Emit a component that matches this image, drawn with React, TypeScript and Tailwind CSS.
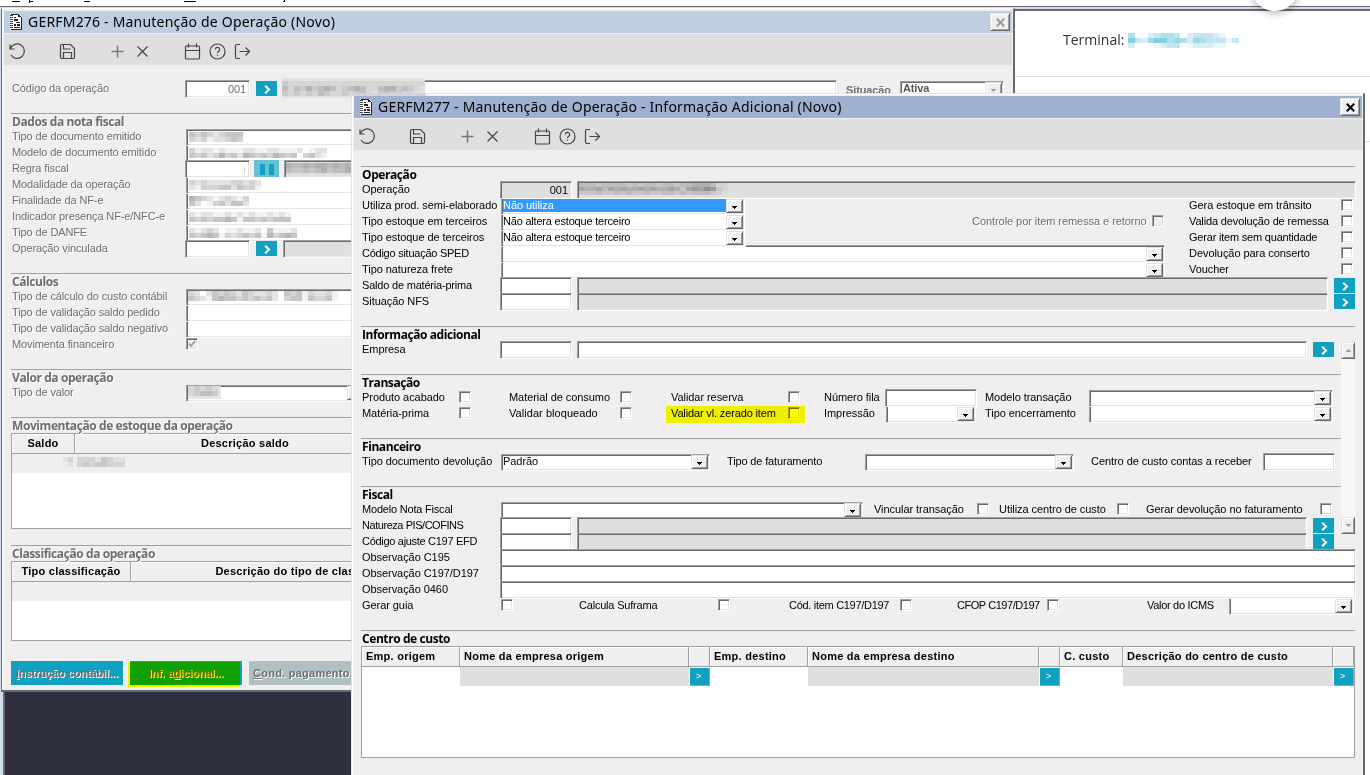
import React from "react";
import clsx from "clsx";

const SUNKEN =
  "shrink-0 border border-t-[#a0a0a0] border-l-[#a0a0a0] border-b-white border-r-white shadow-[inset_1px_1px_0_#696969,inset_-1px_-1px_0_#e3e3e3]";
const RAISED =
  "border border-t-[#e3e3e3] border-l-[#e3e3e3] border-b-[#696969] border-r-[#696969] bg-[#efefef] shadow-[inset_1px_1px_0_#fff,inset_-1px_-1px_0_#a0a0a0]";
const DISABLED_TEXT = "text-[#6d6d6d] [text-shadow:1px_1px_0_#fff]";

function Row({ children, className }: { children: React.ReactNode; className?: string }) {
  return <div className={clsx("flex h-4 items-start", className)}>{children}</div>;
}

function Label({ children, className, disabled }: { children: React.ReactNode; className?: string; disabled?: boolean }) {
  return (
    <span className={clsx("block h-4 shrink-0 whitespace-nowrap pl-px leading-4", disabled && DISABLED_TEXT, className)}>
      {children}
    </span>
  );
}

function Field({ value, className, readOnly }: { value?: React.ReactNode; className?: string; readOnly?: boolean }) {
  return (
    <div className={clsx("h-[18px] pr-[3px] text-right leading-[17px]", SUNKEN, readOnly ? "bg-[#dfdfdf]" : "bg-white", className)}>
      {value}
    </div>
  );
}

function Arrow({ up, color = "#000" }: { up?: boolean; color?: string }) {
  return (
    <svg width="5" height="3" viewBox="0 0 5 3" shapeRendering="crispEdges" fill={color}>
      <path d={up ? "M2 0h1v1h1v1h1v1H0V2h1V1h1z" : "M0 0h5v1H4v1H3v1H2V2H1V1H0z"} />
    </svg>
  );
}

// stacked selects share the bottom edge of the one above
function Select({
  value,
  className,
  stacked,
  selected,
  disabled
}: {
  value?: React.ReactNode;
  className?: string;
  stacked?: boolean;
  selected?: boolean;
  disabled?: boolean;
}) {
  return (
    <div
      className={clsx(
        "mt-px flex h-[17px] shrink-0 border border-l-[#a0a0a0] border-b-white border-r-white bg-white",
        stacked
          ? "border-t-white shadow-[inset_1px_0_0_#696969,inset_-1px_-1px_0_#e3e3e3]"
          : "border-t-[#a0a0a0] shadow-[inset_1px_1px_0_#696969,inset_-1px_-1px_0_#e3e3e3]",
        className
      )}
    >
      <div className={clsx("ml-px h-[13px] flex-1 whitespace-nowrap leading-[13px]", selected && "bg-[#3399ff] text-white")}>
        {value}
      </div>
      <div className={clsx("mr-px flex h-[14px] w-[17px] items-center justify-center pt-[2px]", RAISED)}>
        <Arrow color={disabled ? "#a0a0a0" : "#000"} />
      </div>
    </div>
  );
}

function Check({ className, disabled, checked }: { className?: string; disabled?: boolean; checked?: boolean }) {
  return (
    <span className={clsx("mt-[2px] block h-[12px] w-[12px]", SUNKEN, disabled ? "bg-[#efefef]" : "bg-white", className)}>
      {checked && (
        <svg width="10" height="10" viewBox="0 0 10 10" fill="none" stroke="#a0a0a0" strokeWidth="2">
          <path d="M2 4.5l2 2.5 4-5" />
        </svg>
      )}
    </span>
  );
}

function Lookup({ className }: { className?: string }) {
  return (
    <button className={clsx("mt-px flex h-[15px] w-[21px] shrink-0 items-center justify-center bg-[#10a0c0] pl-px pt-px", className)}>
      <svg width="7" height="9" viewBox="0 0 7 9" fill="none" stroke="#fff" strokeWidth="2">
        <path d="M1.2 .8L5 4.5 1.2 8.2" />
      </svg>
    </button>
  );
}

function Highlight({ className }: { className: string }) {
  return <div className={clsx("pointer-events-none absolute bg-[#ff0] mix-blend-multiply", className)} />;
}

// masked value: every digit is the darkness of one cell
function Mosaic({ rows, cell = 6, line = 5, color = "#555", className }: { rows: string[]; cell?: number; line?: number; color?: string; className?: string }) {
  const width = rows[0].length * cell;
  return (
    <svg className={clsx("block shrink-0", className)} width={width} height={rows.length * line} shapeRendering="crispEdges" fill={color}>
      {rows.map((row, y) =>
        row.split("").map((level, x) => (
          <rect key={`${y}-${x}`} x={x * cell} y={y * line} width={cell} height={line} opacity={Number(level) / 12} />
        ))
      )}
    </svg>
  );
}

function Section({ title, disabled, children, className }: { title: string; disabled?: boolean; children?: React.ReactNode; className?: string }) {
  return (
    <section className={className}>
      <div className="h-px bg-[#a0a0a0]" />
      <h2
        className={clsx(
          "h-[14px] whitespace-nowrap pl-px font-['Open_Sans',sans-serif] text-[12px] font-bold leading-4 tracking-[-0.42px]",
          disabled && DISABLED_TEXT
        )}
      >
        {title}
      </h2>
      {children}
    </section>
  );
}

function TitleBar({ title, active }: { title: string; active?: boolean }) {
  return (
    <header className={clsx("flex h-[22px] items-center pl-[6px] pr-[2px]", active ? "bg-[#a0b0d0]" : "bg-[#c0cfe0]")}>
      <svg width="12" height="16" viewBox="0 0 12 16" shapeRendering="crispEdges">
        <path d="M0 0h9l3 3v13H0z" fill="#fff" />
        <path d="M1 0h8v1H1zM1 15h11v1H1zM11 3h1v12h-1zM9 1h1v1h1v1H8V1zM4 3h2v1H4zM4 5h4v2H4zM6 8h4v1H6zM4 10h2v2H4zM7 10h3v2H7zM4 13h6v1H4z" fill="#222" />
        <path d="M0 1h3v1H0zM0 3h3v1H0zM0 5h3v1H0zM0 7h3v1H0zM0 9h3v1H0zM0 11h3v1H0zM0 13h3v1H0z" fill="#444" />
      </svg>
      <h1 className="ml-[6px] flex-1 whitespace-nowrap font-['Noto_Sans',sans-serif] text-[14px] leading-[22px] tracking-[0.2px]">{title}</h1>
      <button className={clsx("flex h-[18px] w-5 items-center justify-center", RAISED)}>
        <svg width="9" height="9" viewBox="0 0 9 9" stroke={active ? "#000" : "#999"} strokeWidth="2">
          <path d="M.8 .7l7.4 7.6M8.2 .7L.8 8.3" />
        </svg>
      </button>
    </header>
  );
}

const TOOL_ICONS: (string | null)[] = [
  "M1 1.5v4.500h4.500M1.300 5.700A7.200 7.200 0 1 1 2 12",
  null,
  "M1.500 3a1.500 1.500 0 0 1 1.500-1.500h8.500l4 4V14a1.500 1.500 0 0 1-1.500 1.500H3A1.500 1.500 0 0 1 1.500 14zM4.500 15.500V9.500h8v6M4.500 1.500v4.500h7",
  null,
  "M8.500 2.500v12M2.500 8.500h12",
  "M3.500 3.500l10 10M13.500 3.500l-10 10",
  null,
  "M1.500 4a1 1 0 0 1 1-1h12a1 1 0 0 1 1 1v11a1 1 0 0 1-1 1h-12a1 1 0 0 1-1-1zM1.500 7.500h14M4.500 .5v4M12.500 .5v4",
  "M8.500 1a7.500 7.500 0 1 0 0 15a7.500 7.500 0 1 0 0-15M6.300 6.500a2.200 2.200 0 1 1 3.200 2c-.8.4-1 .8-1 1.500M8.500 11.500v1.200",
  "M6 1.500H3A1.500 1.500 0 0 0 1.500 3v11A1.500 1.500 0 0 0 3 15.500h3M5.500 8.500h10M11.500 4.500l4 4-4 4"
];

function Toolbar() {
  return (
    <nav className="mt-px flex h-[31px] items-center bg-[#dfdfdf] pl-px pt-[3px]">
      {TOOL_ICONS.map((d, index) => (
        <span key={index} className="flex w-[25px] justify-center">
          {d && (
            <svg width="17" height="17" viewBox="0 0 17 17" fill="none" stroke={index === 4 ? "#777" : "#444"} strokeWidth={index === 4 ? 1.5 : 1.2}>
              <path d={d} />
            </svg>
          )}
        </span>
      ))}
    </nav>
  );
}

function HeadCell({ children, className }: { children?: React.ReactNode; className?: string }) {
  return (
    <div
      className={clsx(
        "h-5 shrink-0 overflow-hidden whitespace-nowrap border-b border-r border-[#a0a0a0] bg-[#efefef] text-[11px] font-bold leading-[19px] tracking-[0.25px] shadow-[inset_1px_1px_0_#fff]",
        className
      )}
    >
      {children}
    </div>
  );
}

function GridLookup({ className }: { className?: string }) {
  return (
    <div className={clsx("mt-px flex h-[18px] items-center justify-center border-b border-r border-[#a0a0a0] bg-[#10a0c0] pr-[2px] pt-px text-[9px] text-white", className)}>
      &gt;
    </div>
  );
}

function OperationWindow() {
  return (
    <div className="absolute left-[1px] top-[8px] h-[684px] w-[1014px] overflow-hidden border-b-2 border-l border-r-2 border-t border-b-[#696969] border-l-[#696969] border-r-[#696969] border-t-white bg-[#efefef] pl-[2px] pr-px pt-[2px] shadow-[inset_1px_0_0_#fff]">
      <TitleBar title="GERFM276 - Manutenção de Operação (Novo)" />
      <Toolbar />
      <div className="pl-[7px] pt-[15px] text-[11px] tracking-[-0.12px]">
        <Row className="mb-[17px]">
          <Label disabled className="w-[174px]">Código da operação</Label>
          <Field value={<span className="text-[#6d6d6d]">001</span>} className="w-[65px]" />
          <Lookup className="ml-[6px]" />
          <div className="relative ml-[6px]">
            <div className={clsx("h-[18px] w-[554px] bg-white", SUNKEN)} />
            <div className="absolute -left-px -top-[2px] h-[20px] w-[143px] bg-[#e2e2e2]">
              <Mosaic rows={["211111111111111111111111", "313242343123431134423210", "212121321121231023221100"]} className="mt-[3px]" />
            </div>
          </div>
          <Label disabled className="ml-[8px] w-[55px] pt-[2px] font-bold">Situação</Label>
          <Select disabled value={<b className="pl-px text-[#555]">Ativa</b>} className="w-[104px]" />
        </Row>

        <Section title="Dados da nota fiscal" disabled className="mb-[17px]">
          <Row>
            <Label disabled className="w-[175px]">Tipo de documento emitido</Label>
            <Select className="w-[600px]" value={<Mosaic rows={["434323444", "323122343"]} className="ml-px mt-[2px]" />} />
          </Row>
          <Row>
            <Label disabled className="w-[175px]">Modelo de documento emitido</Label>
            <Select stacked className="w-[600px]" value={<Mosaic rows={["31221211122112211120122", "43423534254343543403421"]} className="ml-px mt-[2px]" />} />
          </Row>
          <Row>
            <Label disabled className="w-[174px]">Regra fiscal</Label>
            <Field className="w-[65px]" value={<span className="text-[#ccc]">ı</span>} />
            <div className="ml-1 flex h-[18px] w-[25px] items-center justify-center gap-[4px] bg-[#68c0d4]">
              <i className="h-[11px] w-[5px] bg-[#10a0c0]" />
              <i className="h-[11px] w-[5px] bg-[#10a0c0]" />
            </div>
            <Field readOnly className="ml-[5px] w-[500px]" value={<Mosaic rows={["433434434345", "322323423344"]} className="mt-[2px]" />} />
          </Row>
          <Row>
            <Label disabled className="w-[175px]">Modalidade da operação</Label>
            <Select stacked className="w-[600px]" value={<Mosaic rows={["323222233232", "213334424331"]} className="ml-px mt-[2px]" />} />
          </Row>
          <Row>
            <Label disabled className="w-[175px]">Finalidade da NF-e</Label>
            <Select stacked className="w-[600px]" value={<Mosaic rows={["5432123213", "4201342442"]} className="ml-px mt-[2px]" />} />
          </Row>
          <Row>
            <Label disabled className="w-[175px]">Indicador presença NF-e/NFC-e</Label>
            <Select stacked className="w-[600px]" value={<Mosaic rows={["21221121212112121", "43434454144343444"]} className="ml-px mt-[2px]" />} />
          </Row>
          <Row>
            <Label disabled className="w-[175px]">Tipo de DANFE</Label>
            <Select stacked className="w-[600px]" value={<Mosaic rows={["212320112112041112", "434541323434153454"]} className="ml-px mt-[2px]" />} />
          </Row>
          <Row>
            <Label disabled className="w-[174px]">Operação vinculada</Label>
            <Field className="w-[65px]" />
            <Lookup className="ml-[6px]" />
            <Field readOnly className="ml-[6px] w-[500px]" />
          </Row>
        </Section>

        <Section title="Cálculos" disabled className="mb-[17px]">
          <Row>
            <Label disabled className="w-[175px]">Tipo de cálculo do custo contábil</Label>
            <Select className="w-[600px]" value={<Mosaic rows={["3202434324322320434132231", "4321454434343420344143341"]} className="mt-[1px]" />} />
          </Row>
          <Row>
            <Label disabled className="w-[175px]">Tipo de validação saldo pedido</Label>
            <Select stacked className="w-[600px]" />
          </Row>
          <Row>
            <Label disabled className="w-[175px]">Tipo de validação saldo negativo</Label>
            <Select stacked className="w-[600px]" />
          </Row>
          <Row>
            <Label disabled className="w-[175px]">Movimenta financeiro</Label>
            <Check disabled checked />
          </Row>
        </Section>

        <Section title="Valor da operação" disabled className="mb-[17px]">
          <Row>
            <Label disabled className="w-[175px]">Tipo de valor</Label>
            <Select
              className="w-[180px]"
              value={
                <div className="h-[13px] w-[33px] bg-[#e4e4e4]">
                  <Mosaic rows={["12121", "12332"]} />
                </div>
              }
            />
          </Row>
        </Section>

        <Section title="Movimentação de estoque da operação" disabled className="mb-4">
          <div className="mt-px h-[96px] border border-[#a0a0a0] bg-white">
            <div className="flex">
              <HeadCell className="w-[63px] text-center">Saldo</HeadCell>
              <HeadCell className="w-[341px] text-center">Descrição saldo</HeadCell>
            </div>
            <div className="flex h-[19px] bg-[#efefef] pl-[51px] pt-[3px]">
              <Mosaic rows={["12", "01"]} cell={5} />
              <Mosaic rows={["22213211", "23233222"]} className="ml-1" />
            </div>
          </div>
        </Section>

        <Section title="Classificação da operação" disabled>
          <div className="mt-px h-[80px] border border-[#a0a0a0] bg-white">
            <div className="flex">
              <HeadCell className="w-[119px] text-center">Tipo classificação</HeadCell>
              <HeadCell className="w-[358px] text-center">Descrição do tipo de classificação</HeadCell>
            </div>
            <div className="h-[19px] bg-[#efefef]" />
          </div>
        </Section>

        <div className="relative mt-5 flex h-6 gap-[7px] text-[11px] font-bold leading-6 tracking-[-0.1px] text-[#6d6d6d]">
          <button className="w-[112px] whitespace-nowrap bg-[#10a0c0] text-center [text-shadow:1px_1px_0_#fff]"><u>I</u>nstrução contábil...</button>
          <button className="w-[112px] whitespace-nowrap bg-[#10a0c0] text-center [text-shadow:1px_1px_0_#fff]">Inf. a<u>d</u>icional...</button>
          <button className="w-[112px] whitespace-nowrap bg-[#b0c0c0] pl-1 text-left tracking-[0.25px] [text-shadow:1px_1px_0_#fff]"><u>C</u>ond. pagamento...</button>
          <Highlight className="left-[117px] top-px h-[25px] w-[112px]" />
        </div>
      </div>
    </div>
  );
}

function ScrollBar() {
  return (
    <div className="mt-px flex h-[192px] w-[14px] flex-col justify-between bg-[#f7f7f7]">
      <div className={clsx("flex h-[17px] items-center justify-center", RAISED)}>
        <Arrow up color="#a0a0a0" />
      </div>
      <div className={clsx("flex h-[17px] items-center justify-center", RAISED)}>
        <Arrow color="#a0a0a0" />
      </div>
    </div>
  );
}

function AdditionalInfoWindow() {
  return (
    <div className="absolute left-[351px] top-[93px] h-[690px] w-[1014px] border-l border-r-2 border-t border-l-[#e3e3e3] border-r-[#696969] border-t-[#e3e3e3] bg-[#efefef] pr-px shadow-[inset_1px_1px_0_#fff]">
      <div className="pl-[2px] pt-[2px]">
        <TitleBar active title="GERFM277 - Manutenção de Operação - Informação Adicional (Novo)" />
        <Toolbar />
      </div>
      <div className="w-[1003px] pl-[9px] pt-4 text-[11px] tracking-[-0.06px]">
        <Section title="Operação" className="mb-[17px]">
          <Row>
            <Label className="w-[139px]">Operação</Label>
            <Field readOnly value="001" className="w-[72px]" />
            <Field
              readOnly
              className="ml-[5px] w-[779px]"
              value={<Mosaic rows={["3332333323233233233444311", "5445354544545445425657621", "2223223232232233232333210"]} line={4} className="mt-[1px]" />}
            />
          </Row>
          <Row>
            <Label className="w-[139px]">Utiliza prod. semi-elaborado</Label>
            <Select selected value="Não utiliza" className="ml-px w-[244px]" stacked />
            <Label className="ml-[443px] w-[153px]">Gera estoque em trânsito</Label>
            <Check />
          </Row>
          <Row>
            <Label className="w-[139px]">Tipo estoque em terceiros</Label>
            <Select stacked value="Não altera estoque terceiro" className="ml-px w-[244px] tracking-[-0.2px]" />
            <Label disabled className="ml-[226px] w-[181px]">Controle por item remessa e retorno</Label>
            <Check disabled />
            <Label className="ml-[24px] w-[153px] tracking-[-0.14px]">Valida devolução de remessa</Label>
            <Check />
          </Row>
          <Row>
            <Label className="w-[139px]">Tipo estoque de terceiros</Label>
            <Select stacked value="Não altera estoque terceiro" className="ml-px w-[244px] tracking-[-0.2px]" />
            <Label className="ml-[443px] w-[153px] tracking-[-0.2px]">Gerar item sem quantidade</Label>
            <Check />
          </Row>
          <Row>
            <Label className="w-[139px] tracking-[-0.25px]">Código situação SPED</Label>
            <div className="relative ml-px">
              <Select stacked className="w-[664px]" />
              <div className="absolute left-[245px] right-px top-0 h-[2px] border-t border-[#a0a0a0] bg-[#696969]" />
            </div>
            <Label className="ml-[23px] w-[153px]">Devolução para conserto</Label>
            <Check />
          </Row>
          <Row>
            <Label className="w-[139px]">Tipo natureza frete</Label>
            <Select stacked className="ml-px w-[664px]" />
            <Label className="ml-[23px] w-[153px]">Voucher</Label>
            <Check />
          </Row>
          <Row>
            <Label className="w-[139px] tracking-[-0.2px]">Saldo de matéria-prima</Label>
            <Field className="w-[72px]" />
            <Field readOnly className="ml-[5px] w-[751px]" />
            <Lookup className="ml-[6px]" />
          </Row>
          <Row>
            <Label className="w-[139px]">Situação NFS</Label>
            <Field className="w-[72px]" />
            <Field readOnly className="ml-[5px] w-[751px]" />
            <Lookup className="ml-[6px]" />
          </Row>
        </Section>

        <Section title="Informação adicional">
          <div className="flex h-[208px]">
            <div className="w-[980px]">
              <Row className="mb-[17px]">
                <Label className="w-[139px]">Empresa</Label>
                <Field className="w-[72px]" />
                <Field className="ml-[5px] w-[730px]" />
                <Lookup className="ml-[6px]" />
              </Row>

              <Section title="Transação" className="mb-[17px]">
                <Row>
                  <Label className="w-[98px]">Produto acabado</Label>
                  <Check />
                  <Label className="ml-[37px] w-[112px]">Material de consumo</Label>
                  <Check />
                  <Label className="ml-[38px] w-[118px]">Validar reserva</Label>
                  <Check />
                  <Label className="ml-[23px] w-[62px]">Número fila</Label>
                  <Field className="w-[92px]" />
                  <Label className="ml-[7px] w-[105px]">Modelo transação</Label>
                  <Select className="w-[244px]" />
                </Row>
                <Row className="relative">
                  <Label className="w-[98px]">Matéria-prima</Label>
                  <Check />
                  <Label className="ml-[37px] w-[112px] tracking-[0.05px]">Validar bloqueado</Label>
                  <Check />
                  <Label className="ml-[38px] w-[118px] tracking-[-0.14px]">Validar vl. zerado item</Label>
                  <Check />
                  <Label className="ml-[23px] w-[63px]">Impressão</Label>
                  <Select stacked className="w-[90px]" />
                  <Label className="ml-[8px] w-[105px]">Tipo encerramento</Label>
                  <Select stacked className="w-[244px]" />
                  <Highlight className="left-[305px] top-px h-[17px] w-[139px]" />
                </Row>
              </Section>

              <Section title="Financeiro" className="mb-[17px]">
                <Row>
                  <Label className="w-[139px]">Tipo documento devolução</Label>
                  <Select value="Padrão" className="ml-px w-[209px]" />
                  <Label className="ml-[16px] w-[139px] tracking-[-0.15px]">Tipo de faturamento</Label>
                  <Select className="w-[209px]" />
                  <Label className="ml-[16px] w-[173px]">Centro de custo contas a receber</Label>
                  <Field className="w-[72px]" />
                </Row>
              </Section>

              <Section title="Fiscal">
                <Row>
                  <Label className="w-[139px] tracking-[-0.2px]">Modelo Nota Fiscal</Label>
                  <Select className="ml-px w-[362px]" />
                  <Label className="ml-[10px] w-[104px]">Vincular transação</Label>
                  <Check />
                  <Label className="ml-[9px] w-[119px]">Utiliza centro de custo</Label>
                  <Check />
                  <Label className="ml-[16px] w-[175px]">Gerar devolução no faturamento</Label>
                  <Check />
                </Row>
                <Row>
                  <Label className="w-[139px] tracking-[-0.45px]">Natureza PIS/COFINS</Label>
                  <Field className="w-[72px]" />
                  <Field readOnly className="ml-[5px] w-[730px]" />
                  <Lookup className="ml-[6px]" />
                </Row>
                <Row>
                  <Label className="w-[139px] tracking-[-0.3px]">Código ajuste C197 EFD</Label>
                  <Field className="w-[72px]" />
                  <Field readOnly className="ml-[5px] w-[730px]" />
                  <Lookup className="ml-[6px]" />
                </Row>
              </Section>
            </div>
            <ScrollBar />
          </div>
          <Row>
            <Label className="w-[139px]">Observação C195</Label>
            <Field className="w-[856px]" />
          </Row>
          <Row>
            <Label className="w-[139px]">Observação C197/D197</Label>
            <Field className="w-[856px]" />
          </Row>
          <Row>
            <Label className="w-[139px]">Observação 0460</Label>
            <Field className="w-[856px]" />
          </Row>
          <Row className="mb-[17px]">
            <Label className="w-[140px]">Gerar guia</Label>
            <Check />
            <Label className="ml-[65px] w-[140px] tracking-[-0.2px]">Calcula Suframa</Label>
            <Check />
            <Label className="ml-[58px] w-[112px] tracking-[-0.3px]">Cód. item C197/D197</Label>
            <Check />
            <Label className="ml-[44px] w-[91px] tracking-[-0.45px]">CFOP C197/D197</Label>
            <Check />
            <Label className="ml-[87px] w-[83px] tracking-[-0.3px]">Valor do ICMS</Label>
            <Select stacked className="w-[125px]" />
          </Row>
        </Section>

        <Section title="Centro de custo">
          <div className="mt-px h-[112px] w-[994px] border border-[#a0a0a0] bg-white">
            <div className="flex">
              <HeadCell className="w-[98px] pl-1">Emp. origem</HeadCell>
              <HeadCell className="w-[229px] pl-1">Nome da empresa origem</HeadCell>
              <HeadCell className="w-[21px]" />
              <HeadCell className="w-[98px] pl-1">Emp. destino</HeadCell>
              <HeadCell className="w-[231px] pl-1">Nome da empresa destino</HeadCell>
              <HeadCell className="w-[21px]" />
              <HeadCell className="w-[63px] pl-1">C. custo</HeadCell>
              <HeadCell className="w-[210px] pl-1">Descrição do centro de custo</HeadCell>
              <HeadCell className="w-[21px]" />
            </div>
            <div className="flex h-[19px]">
              <div className="w-[98px]" />
              <div className="w-[229px] bg-[#dfdfdf]" />
              <GridLookup className="ml-px w-[20px]" />
              <div className="w-[98px]" />
              <div className="w-[231px] bg-[#dfdfdf]" />
              <GridLookup className="ml-px w-[20px]" />
              <div className="w-[63px]" />
              <div className="w-[210px] bg-[#dfdfdf]" />
              <GridLookup className="ml-px w-[20px]" />
            </div>
          </div>
        </Section>
      </div>
    </div>
  );
}

export default function App() {
  return (
    <div className="relative h-[775px] w-[1370px] overflow-hidden bg-white font-['Liberation_Sans',sans-serif] text-black">
      <svg className="block" width="1370" height="6" shapeRendering="crispEdges" fill="#000">
        <path d="M12 1h8v1h-8zM29 0h1v3h-1zM30 1h3v1h-3zM84 1h6v1h-6zM184 1h12v1h-12zM284 0h1v1h-1zM283 1h2v1h-2z" />
      </svg>
      <div className="h-px bg-[#696969]" />
      <div className="h-[2px] bg-[#cfdfef]" />
      <div className="flex">
        <div className="mt-px flex h-[765px] w-[1015px]">
          <div className="w-[3px] bg-[#cfdfef]" />
          <div className="flex-1 border-l-2 border-[#696969] bg-[#2f303f]" />
        </div>
        <div className="h-[766px] flex-1 border-t-2 border-[#696969] bg-white">
          <div className="flex h-[66px] items-start border-b border-[#e0e0e0] pl-[48px] pt-[19px]">
            <span className="font-['Open_Sans',sans-serif] text-[14px] leading-5 text-[#2f303f]">Terminal:</span>
            <Mosaic rows={["40023443023332100", "63256645425433313", "20001233012221100"]} color="#10a0c0" cell={6.5} className="ml-1 mt-[3px]" />
          </div>
          <div className="h-[65px] border-b border-[#e0e0e0]" />
        </div>
      </div>
      <div className="absolute left-[1251px] top-[-37px] h-12 w-12 rounded-full bg-white shadow-[0_2px_8px_rgba(0,0,0,0.3)]" />
      <OperationWindow />
      <AdditionalInfoWindow />
      <div className="absolute left-[352px] top-[93px] h-[3px] w-[74px] bg-[#cdd5e2]" />
    </div>
  );
}
